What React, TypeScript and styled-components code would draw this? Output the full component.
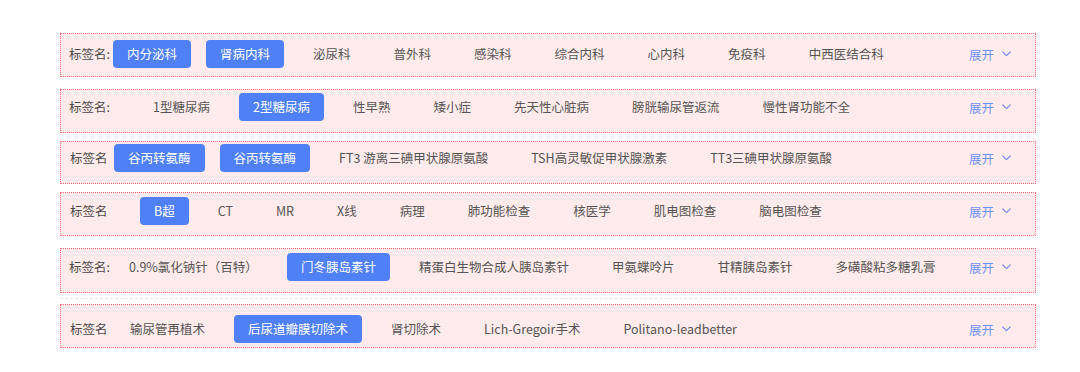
import React from 'react'
import styled, { createGlobalStyle } from 'styled-components'

const GlobalStyle = createGlobalStyle`
  body {
    margin: 0;
    background: #ffffff;
    font-family: "Noto Sans CJK SC", "Noto Sans", sans-serif;
  }
`

type RowProps = {
  $mt: number
  $h: number
  $pt: number
}

type LabelProps = {
  $w: number
  $ml: number
}

type TagProps = {
  $active?: boolean
}

const Page = styled.div`
  padding: 0 0 20px 60px;
  width: 976px;
`

const Row = styled.div<RowProps>`
  box-sizing: border-box;
  display: flex;
  align-items: flex-start;
  margin-top: ${(props) => props.$mt}px;
  height: ${(props) => props.$h}px;
  padding: ${(props) => props.$pt}px 24px 0 0;
  background: #ffebeb;
  border: 1px dotted #f4687a;
`

const Label = styled.span<LabelProps>`
  flex: none;
  width: ${(props) => props.$w}px;
  margin-left: ${(props) => props.$ml}px;
  line-height: 28px;
  font-size: 12.5px;
  color: #4a4a4a;
  white-space: nowrap;
`

const Tag = styled.span<TagProps>`
  flex: none;
  height: 28px;
  line-height: 28px;
  padding: 0 14px;
  margin-right: 15px;
  border-radius: 4px;
  font-size: 12.5px;
  white-space: nowrap;
  color: ${(props) => (props.$active ? '#ffffff' : '#555555')};
  background: ${(props) => (props.$active ? '#4f80f6' : 'transparent')};
`

const Expand = styled.span`
  flex: none;
  margin-left: auto;
  display: flex;
  align-items: center;
  gap: 8px;
  height: 28px;
  font-size: 12.5px;
  color: #6f93f4;
  white-space: nowrap;
`

const Divider = styled.div`
  margin: 5px 24px 0 0;
  border-top: 1px dashed #e6e6e6;
`

const Chevron = () => (
  <svg width='9' height='6' viewBox='0 0 9 6' fill='none'>
    <path d='M0.8 1l3.7 3.7L8.2 1' stroke='#6f93f4' strokeWidth='1.2' strokeLinecap='round' strokeLinejoin='round' />
  </svg>
)

type RowData = {
  label: string
  labelWidth: number
  labelLeft: number
  mt: number
  h: number
  pt: number
  items: string[]
  active: number[]
}

const rows: RowData[] = [
  {
    label: '标签名:',
    labelWidth: 44,
    labelLeft: 8,
    mt: 33,
    h: 44,
    pt: 6,
    items: ['内分泌科', '肾病内科', '泌尿科', '普外科', '感染科', '综合内科', '心内科', '免疫科', '中西医结合科'],
    active: [0, 1],
  },
  {
    label: '标签名:',
    labelWidth: 70,
    labelLeft: 8,
    mt: 12,
    h: 44,
    pt: 3,
    items: ['1型糖尿病', '2型糖尿病', '性早熟', '矮小症', '先天性心脏病', '膀胱输尿管返流', '慢性肾功能不全'],
    active: [1],
  },
  {
    label: '标签名',
    labelWidth: 44,
    labelLeft: 9,
    mt: 8,
    h: 43,
    pt: 2,
    items: ['谷丙转氨酶', '谷丙转氨酶', 'FT3 游离三碘甲状腺原氨酸', 'TSH高灵敏促甲状腺激素', 'TT3三碘甲状腺原氨酸'],
    active: [0, 1],
  },
  {
    label: '标签名',
    labelWidth: 70,
    labelLeft: 9,
    mt: 8,
    h: 44,
    pt: 4,
    items: ['B超', 'CT', 'MR', 'X线', '病理', '肺功能检查', '核医学', '肌电图检查', '脑电图检查'],
    active: [0],
  },
  {
    label: '标签名:',
    labelWidth: 46,
    labelLeft: 8,
    mt: 12,
    h: 45,
    pt: 4,
    items: ['0.9%氯化钠针（百特）', '门冬胰岛素针', '精蛋白生物合成人胰岛素针', '甲氨蝶呤片', '甘精胰岛素针', '多磺酸粘多糖乳膏'],
    active: [1],
  },
  {
    label: '标签名',
    labelWidth: 46,
    labelLeft: 9,
    mt: 5,
    h: 44,
    pt: 10,
    items: ['输尿管再植术', '后尿道瓣膜切除术', '肾切除术', 'Lich-Gregoir手术', 'Politano-leadbetter'],
    active: [1],
  },
]

const TagRow = ({ row }: { row: RowData }) => (
  <Row $mt={row.mt} $h={row.h} $pt={row.pt}>
    <Label $w={row.labelWidth} $ml={row.labelLeft}>
      {row.label}
    </Label>
    {row.items.map((item, i) => (
      <Tag key={i} $active={row.active.includes(i)}>
        {item}
      </Tag>
    ))}
    <Expand>
      展开
      <Chevron />
    </Expand>
  </Row>
)

const App = () => {
  return (
    <Page>
      <GlobalStyle />
      {rows.map((row, i) => (
        <React.Fragment key={i}>
          {i === 5 && <Divider />}
          <TagRow row={row} />
        </React.Fragment>
      ))}
    </Page>
  )
}

export default App
